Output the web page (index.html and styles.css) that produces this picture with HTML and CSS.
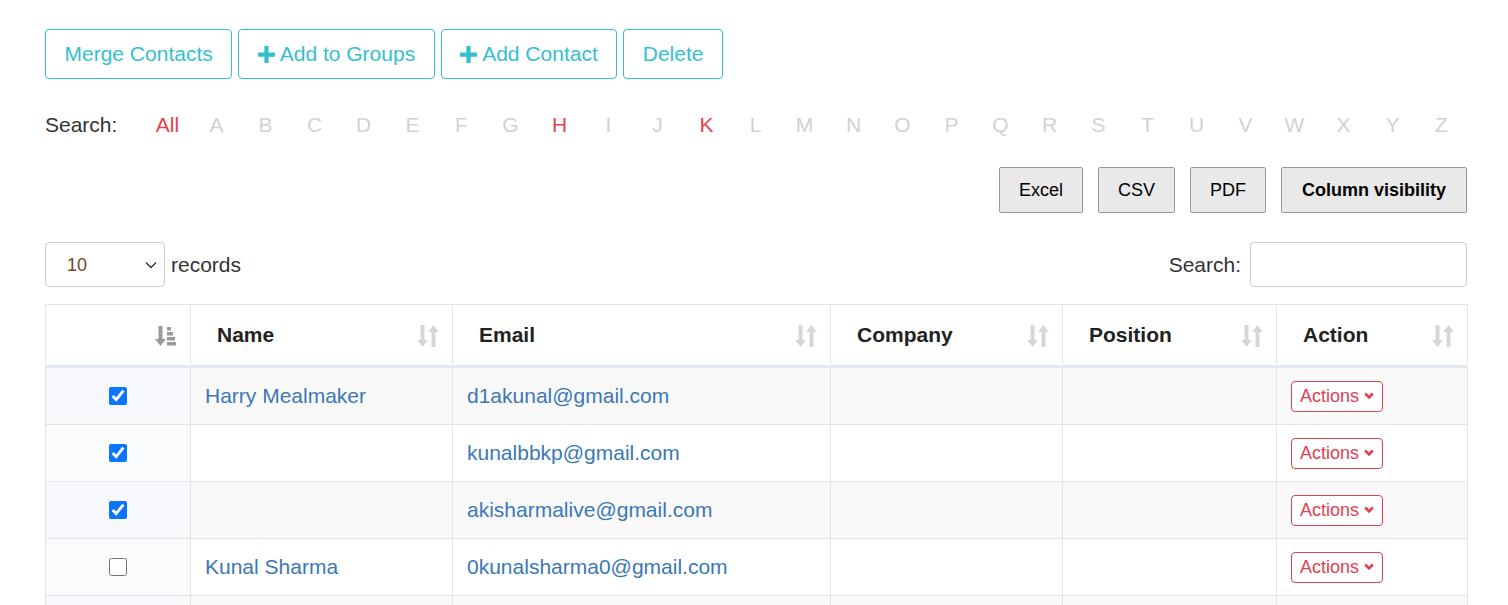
FILE: index.html
```html
<!DOCTYPE html>
<html lang="en">
<head>
  <meta charset="UTF-8">
  <meta name="viewport" content="width=device-width, initial-scale=1.0">
  <title>Contacts</title>
  <link rel="stylesheet" href="styles.css">
</head>
<body>
  <div class="page">
    <div class="toolbar">
      <button class="btn-outline">Merge Contacts</button>
      <button class="btn-outline"><svg class="plus" viewBox="0 0 16 16"><path d="M6 0h4v6h6v4h-6v6H6v-6H0V6h6z"/></svg>Add to Groups</button>
      <button class="btn-outline"><svg class="plus" viewBox="0 0 16 16"><path d="M6 0h4v6h6v4h-6v6H6v-6H0V6h6z"/></svg>Add Contact</button>
      <button class="btn-outline">Delete</button>
    </div>

    <div class="alpha">
      <span class="alpha-label">Search:</span>
      <a class="letter on">All</a>
      <a class="letter">A</a><a class="letter">B</a><a class="letter">C</a><a class="letter">D</a>
      <a class="letter">E</a><a class="letter">F</a><a class="letter">G</a><a class="letter on">H</a>
      <a class="letter">I</a><a class="letter">J</a><a class="letter on">K</a><a class="letter">L</a>
      <a class="letter">M</a><a class="letter">N</a><a class="letter">O</a><a class="letter">P</a>
      <a class="letter">Q</a><a class="letter">R</a><a class="letter">S</a><a class="letter">T</a>
      <a class="letter">U</a><a class="letter">V</a><a class="letter">W</a><a class="letter">X</a>
      <a class="letter">Y</a><a class="letter">Z</a>
    </div>

    <div class="exports">
      <button class="btn-dt">Excel</button>
      <button class="btn-dt">CSV</button>
      <button class="btn-dt">PDF</button>
      <button class="btn-dt bold">Column visibility</button>
    </div>

    <div class="controls">
      <label class="length">
        <span class="select-wrap">
          <select class="length-select">
            <option>10</option>
            <option>25</option>
            <option>50</option>
          </select>
          <svg class="caret" viewBox="0 0 12 8"><path d="M1 1.5l5 5 5-5" fill="none" stroke="#333" stroke-width="1.4"/></svg>
        </span>
        records
      </label>
      <label class="filter">Search: <input type="text" class="filter-input"></label>
    </div>

    <table class="contacts">
      <colgroup>
        <col style="width:145px">
        <col style="width:262px">
        <col style="width:378px">
        <col style="width:232px">
        <col style="width:214px">
        <col style="width:191px">
      </colgroup>
      <thead>
        <tr>
          <th class="sorted">
            <svg class="sort-amt" viewBox="0 0 22 22"><path d="M3.5 1h4v13h3.5l-5.5 7L0 14h3.5z M12 2h4v3.5h-4z M12 7h6v3.5h-6z M12 12h8v3.5h-8z M12 17h9v3.5h-9z" fill="#9a9a9a"/></svg>
          </th>
          <th>Name<svg class="sort" viewBox="0 0 22 24"><path d="M3.5 1h4v15h3.5l-5.5 7L0 16h3.5z M14.5 23h4V8H22l-5.5-7L11 8h3.5z" fill="#d6d6d6"/></svg></th>
          <th>Email<svg class="sort" viewBox="0 0 22 24"><path d="M3.5 1h4v15h3.5l-5.5 7L0 16h3.5z M14.5 23h4V8H22l-5.5-7L11 8h3.5z" fill="#d6d6d6"/></svg></th>
          <th>Company<svg class="sort" viewBox="0 0 22 24"><path d="M3.5 1h4v15h3.5l-5.5 7L0 16h3.5z M14.5 23h4V8H22l-5.5-7L11 8h3.5z" fill="#d6d6d6"/></svg></th>
          <th>Position<svg class="sort" viewBox="0 0 22 24"><path d="M3.5 1h4v15h3.5l-5.5 7L0 16h3.5z M14.5 23h4V8H22l-5.5-7L11 8h3.5z" fill="#d6d6d6"/></svg></th>
          <th>Action<svg class="sort" viewBox="0 0 22 24"><path d="M3.5 1h4v15h3.5l-5.5 7L0 16h3.5z M14.5 23h4V8H22l-5.5-7L11 8h3.5z" fill="#d6d6d6"/></svg></th>
        </tr>
      </thead>
      <tbody>
        <tr class="odd">
          <td class="check"><input type="checkbox" checked></td>
          <td><a>Harry Mealmaker</a></td>
          <td><a>d1akunal@gmail.com</a></td>
          <td></td>
          <td></td>
          <td><button class="btn-actions">Actions<svg viewBox="0 0 10 8"><path d="M1.2 1.5l3.8 3.8 3.8-3.8" fill="none" stroke="#e2404f" stroke-width="2.6"/></svg></button></td>
        </tr>
        <tr>
          <td class="check"><input type="checkbox" checked></td>
          <td></td>
          <td><a>kunalbbkp@gmail.com</a></td>
          <td></td>
          <td></td>
          <td><button class="btn-actions">Actions<svg viewBox="0 0 10 8"><path d="M1.2 1.5l3.8 3.8 3.8-3.8" fill="none" stroke="#e2404f" stroke-width="2.6"/></svg></button></td>
        </tr>
        <tr class="odd">
          <td class="check"><input type="checkbox" checked></td>
          <td></td>
          <td><a>akisharmalive@gmail.com</a></td>
          <td></td>
          <td></td>
          <td><button class="btn-actions">Actions<svg viewBox="0 0 10 8"><path d="M1.2 1.5l3.8 3.8 3.8-3.8" fill="none" stroke="#e2404f" stroke-width="2.6"/></svg></button></td>
        </tr>
        <tr>
          <td class="check"><input type="checkbox"></td>
          <td><a>Kunal Sharma</a></td>
          <td><a>0kunalsharma0@gmail.com</a></td>
          <td></td>
          <td></td>
          <td><button class="btn-actions">Actions<svg viewBox="0 0 10 8"><path d="M1.2 1.5l3.8 3.8 3.8-3.8" fill="none" stroke="#e2404f" stroke-width="2.6"/></svg></button></td>
        </tr>
        <tr class="odd">
          <td class="check"><input type="checkbox"></td>
          <td></td>
          <td></td>
          <td></td>
          <td></td>
          <td></td>
        </tr>
      </tbody>
    </table>
  </div>
</body>
</html>
```

FILE: styles.css
```css
body {
  margin: 0;
  font-family: "Liberation Sans", Arial, sans-serif;
  color: #333;
  background: #fff;
  overflow: hidden;
}

.page {
  padding: 29px 41px 0 45px;
}

.toolbar {
  display: flex;
  gap: 6px;
}

.btn-outline {
  height: 50px;
  padding: 0 18.5px;
  font-family: inherit;
  font-size: 21px;
  color: #35bfcf;
  background: #fff;
  border: 1px solid #35bfcf;
  border-radius: 4px;
  display: flex;
  align-items: center;
}

.plus {
  width: 17px;
  height: 17px;
  fill: #35bfcf;
  margin-right: 5px;
}

.alpha {
  display: flex;
  align-items: center;
  margin-top: 33px;
  font-size: 21px;
  line-height: 26px;
}

.alpha-label {
  width: 98px;
}

.letter {
  width: 49px;
  text-align: center;
  color: #d2d2d2;
  cursor: pointer;
}

.letter.on {
  color: #e5434f;
}

.exports {
  display: flex;
  justify-content: flex-end;
  gap: 15px;
  margin-top: 29px;
}

.btn-dt {
  height: 46px;
  padding: 0 19px;
  font-family: inherit;
  font-size: 18px;
  color: #000;
  background: #e9e9e9;
  border: 1px solid #999;
  border-radius: 2px;
}

.btn-dt.bold {
  padding: 0 20px;
  font-weight: bold;
}

.controls {
  display: flex;
  justify-content: space-between;
  align-items: center;
  margin-top: 29px;
  font-size: 21px;
}

.length {
  display: flex;
  align-items: center;
  gap: 6px;
}

.select-wrap {
  position: relative;
  display: inline-block;
}

.length-select {
  appearance: none;
  display: block;
  width: 120px;
  height: 45px;
  padding: 0 0 0 21px;
  font-family: inherit;
  font-size: 18px;
  color: #6e4a27;
  background: #fff;
  border: 1px solid #c8ccd2;
  border-radius: 4px;
}

.caret {
  position: absolute;
  right: 8px;
  top: 19px;
  width: 12px;
  height: 8px;
  pointer-events: none;
}

.filter {
  display: flex;
  align-items: center;
  gap: 9px;
}

.filter-input {
  width: 217px;
  height: 45px;
  box-sizing: border-box;
  border: 1px solid #c8ccd2;
  border-radius: 4px;
  font-size: 18px;
}

.contacts {
  width: 100%;
  margin-top: 17px;
  border-collapse: collapse;
  table-layout: fixed;
  border: 1px solid #e4e4e4;
  font-size: 21px;
}

.contacts th {
  position: relative;
  height: 60px;
  padding: 0 0 0 26px;
  text-align: left;
  font-weight: bold;
  color: #222;
  border-left: 1px solid #e4e4e4;
  border-bottom: 3px solid #e4e9ef;
}

.sort {
  position: absolute;
  right: 13px;
  top: 19px;
  width: 22px;
  height: 24px;
}

.sort-amt {
  position: absolute;
  right: 13px;
  top: 20px;
  width: 22px;
  height: 22px;
}

.contacts td {
  height: 56px;
  padding: 0 0 0 14px;
  border: 1px solid #e4e4e4;
  color: #3a78b5;
}

.contacts a {
  color: #3a78b5;
}

.contacts tr.odd td {
  background: #f9f9f9;
}

.contacts td.check {
  padding: 0;
  background: #fafbfd;
}

.contacts tr.odd td.check {
  background: #f7f8fb;
}

.check input {
  display: block;
  width: 18px;
  height: 18px;
  margin: 0 auto;
  accent-color: #0a75ff;
}

.btn-actions {
  display: inline-flex;
  align-items: center;
  gap: 5px;
  height: 31px;
  padding: 0 8px;
  font-family: inherit;
  font-size: 18px;
  color: #e2404f;
  background: #fff;
  border: 1px solid #e2404f;
  border-radius: 4px;
}

.btn-actions svg {
  width: 10px;
  height: 8px;
}
```
